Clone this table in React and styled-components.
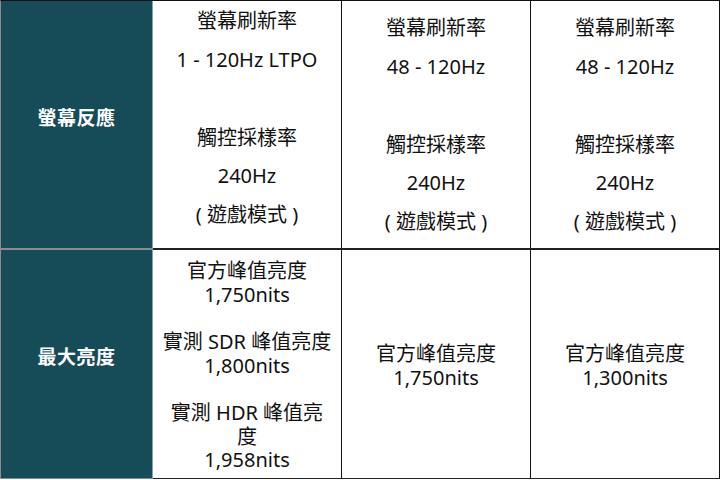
import React from "react";
import styled, { createGlobalStyle } from "styled-components";

const GlobalStyle = createGlobalStyle`
  html, body {
    margin: 0;
    padding: 0;
    background: #ffffff;
  }
  body {
    font-family: "Noto Sans", "Noto Sans CJK TC", sans-serif;
  }
`;

const Table = styled.div`
  width: 720px;
  display: grid;
  grid-template-columns: 152px 189px 189px 189px;
  grid-template-rows: 249px 229px;
  border-top: 1px solid #111;
  border-left: 1px solid #8c8c8c;
`;

const Cell = styled.div`
  box-sizing: border-box;
  display: flex;
  flex-direction: column;
  align-items: center;
  justify-content: center;
  text-align: center;
  background: ${(p) => (p.$head ? "#164c58" : "#ffffff")};
  color: ${(p) => (p.$head ? "#ffffff" : "#111111")};
  border-right: 1px solid ${(p) => (p.$head ? "#9a9a9a" : "#111")};
  border-bottom: ${(p) => (p.$last ? "1px" : "2px")} solid
    ${(p) => (p.$head ? "#8c8c8c" : "#222")};
  padding: ${(p) => p.$drop || 0}px 4px ${(p) => p.$lift || 0}px;
  font-size: 20px;
`;

const HeadLabel = styled.div`
  font-weight: 700;
  font-size: 19px;
  letter-spacing: 0.5px;
`;

const Line = styled.div`
  white-space: nowrap;
  line-height: ${(p) => p.$h}px;
  height: ${(p) => p.$h}px;
`;

const refresh = [
  ["螢幕刷新率", "1 - 120Hz LTPO", "", "觸控採樣率", "240Hz", "( 遊戲模式 )"],
  ["螢幕刷新率", "48 - 120Hz", "", "觸控採樣率", "240Hz", "( 遊戲模式 )"],
  ["螢幕刷新率", "48 - 120Hz", "", "觸控採樣率", "240Hz", "( 遊戲模式 )"],
];

const brightness = [
  [
    "官方峰值亮度",
    "1,750nits",
    "",
    "實測 SDR 峰值亮度",
    "1,800nits",
    "",
    "實測 HDR 峰值亮",
    "度",
    "1,958nits",
  ],
  ["官方峰值亮度", "1,750nits"],
  ["官方峰值亮度", "1,300nits"],
];

const Lines = ({ items, h }) =>
  items.map((t, i) => (
    <Line key={i} $h={h}>
      {t}
    </Line>
  ));

export default function App() {
  return (
    <>
      <GlobalStyle />
      <Table>
        <Cell $head $lift={16}>
          <HeadLabel>螢幕反應</HeadLabel>
        </Cell>
        {refresh.map((col, i) => (
          <Cell key={i} $drop={i === 0 ? 0 : 2} $lift={i === 0 ? 12 : 0}>
            <Lines items={col} h={38.8} />
          </Cell>
        ))}

        <Cell $head $last $lift={16}>
          <HeadLabel>最大亮度</HeadLabel>
        </Cell>
        {brightness.map((col, i) => (
          <Cell key={i} $last $drop={3}>
            <Lines items={col} h={23.7} />
          </Cell>
        ))}
      </Table>
    </>
  );
}
